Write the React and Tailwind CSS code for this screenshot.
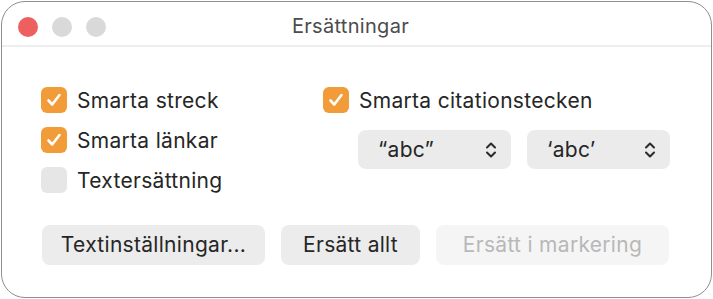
const Check = ({ checked }) => (
  <div
    className={
      "w-[26px] h-[26px] rounded-[6px] flex items-center justify-center shrink-0 " +
      (checked ? "bg-[#f19c38]" : "bg-[#e6e6e6]")
    }
  >
    {checked && (
      <svg width="18" height="18" viewBox="0 0 18 18" fill="none">
        <path d="M3.5 9.5 L7.2 13.5 L14.5 4" stroke="white" strokeWidth="2.6" strokeLinecap="round" strokeLinejoin="round" />
      </svg>
    )}
  </div>
);

const Row = ({ checked, label }) => (
  <div className="flex items-center h-[26px] gap-[10px]">
    <Check checked={checked} />
    <span className="text-[21px] tracking-[0.3px] text-[#262626] leading-none">{label}</span>
  </div>
);

const Chevrons = () => (
  <svg width="12" height="18" viewBox="0 0 12 18" fill="none">
    <path d="M2 6.5 L6 2.5 L10 6.5" stroke="#2a2a2a" strokeWidth="2" strokeLinecap="round" strokeLinejoin="round" />
    <path d="M2 11.5 L6 15.5 L10 11.5" stroke="#2a2a2a" strokeWidth="2" strokeLinecap="round" strokeLinejoin="round" />
  </svg>
);

const Popup = ({ label, width }) => (
  <div className={"h-[39px] rounded-[8px] bg-[#ebebeb] flex items-center justify-between pl-[20px] pr-[14px] " + width}>
    <span className="text-[21px] tracking-[0.3px] text-[#262626] leading-none">{label}</span>
    <Chevrons />
  </div>
);

export default function App() {
  return (
    <div className="w-[713px] h-[299px] p-px bg-white" style={{ fontFamily: "Inter, 'Noto Sans', sans-serif" }}>
      <div className="w-full h-full rounded-[24px] border border-[#8e8e8e] bg-white overflow-hidden flex flex-col">
        <div className="relative h-[45px] border-b-2 border-[#eeeeee] flex items-start pt-[15px] pl-[16px] gap-[14px] shrink-0">
          <div className="w-[20px] h-[20px] rounded-full bg-[#ee5f5f]" />
          <div className="w-[20px] h-[20px] rounded-full bg-[#d9d9d9]" />
          <div className="w-[20px] h-[20px] rounded-full bg-[#d9d9d9]" />
          <div className="absolute left-0 right-[12px] top-[12px] text-center text-[20px] tracking-[0.3px] leading-[24px] text-[#4c4c4c]">
            Ersättningar
          </div>
        </div>
        <div className="pt-[40px] pl-[39px] flex">
          <div className="w-[282px] flex flex-col gap-[14px]">
            <Row checked label="Smarta streck" />
            <Row checked label="Smarta länkar" />
            <Row checked={false} label="Textersättning" />
          </div>
          <div className="flex flex-col gap-[17px]">
            <Row checked label="Smarta citationstecken" />
            <div className="ml-[35px] flex gap-[16px]">
              <Popup label="“abc”" width="w-[153px]" />
              <Popup label="‘abc’" width="w-[143px]" />
            </div>
          </div>
        </div>
        <div className="mt-[32px] pl-[40px] flex gap-[16px]">
          <button className="w-[223px] h-[40px] rounded-[8px] bg-[#ececec] text-[21px] tracking-[0.3px] text-[#262626]">
            Textinställningar...
          </button>
          <button className="w-[139px] h-[40px] rounded-[8px] bg-[#ececec] text-[21px] tracking-[0.3px] text-[#262626]">
            Ersätt allt
          </button>
          <button className="w-[233px] h-[40px] rounded-[8px] bg-[#f5f5f5] text-[21px] tracking-[0.3px] text-[#b8b8b8]">
            Ersätt i markering
          </button>
        </div>
      </div>
    </div>
  );
}
